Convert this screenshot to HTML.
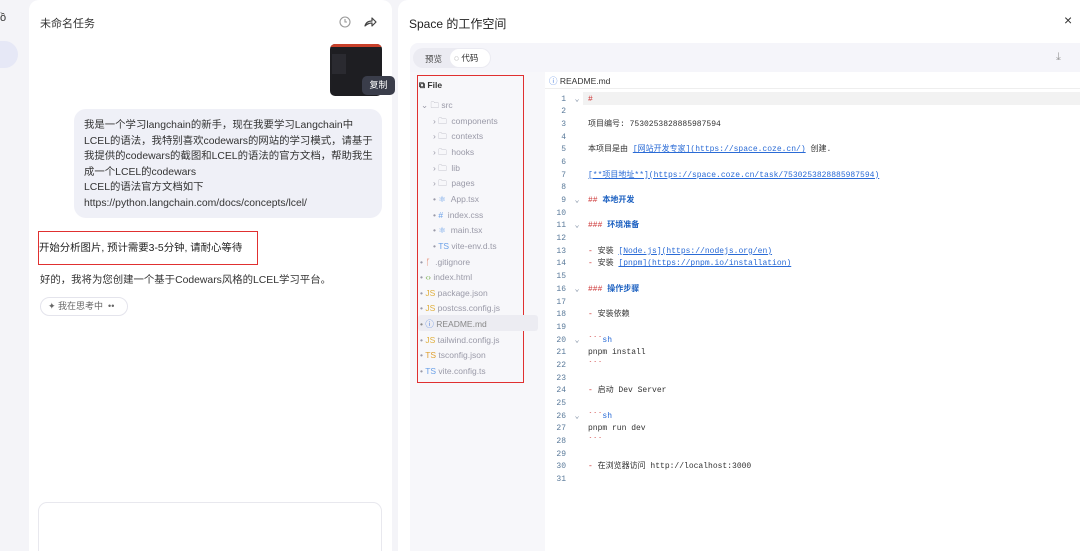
<!DOCTYPE html>
<html><head><meta charset="utf-8"><style>
*{margin:0;padding:0;box-sizing:border-box}
html,body{width:1080px;height:551px;overflow:hidden;background:#f4f4f8}
body{font-family:"Liberation Sans","Noto Sans CJK SC",sans-serif;position:relative;color:#222}
.abs{position:absolute}
.chat{left:29px;top:0;width:363px;height:551px;background:#fff;border-radius:10px 10px 0 0;overflow:hidden}
.right{left:398px;top:0;width:682px;height:551px;background:#fff;border-radius:10px 0 0 0;overflow:hidden}
.tree div{position:absolute;font-size:8.5px;color:#9a9aa8;white-space:nowrap;height:12px;line-height:12px}
.ed{position:absolute;left:150px;top:93.5px;width:532px}
.ed p{height:12.7px;line-height:12.7px;font-family:"Liberation Mono","Noto Sans CJK SC",monospace;font-size:8px;white-space:nowrap;color:#333;position:relative}
.ed p i{font-style:normal;display:inline-block;width:18px;text-align:right;color:#5a7a9a}
.ed p b{font-weight:normal;display:inline-block;width:22px;text-align:center;color:#7a8aa0}
.lk{color:#2a6bd6;text-decoration:underline}
.h{color:#1a5fc0;font-weight:bold}
.r{color:#c33}
</style></head><body>
<div class="abs" style="left:0;top:12px;font-size:11px;color:#333">ồ</div>
<div class="abs" style="left:0;top:41px;width:18px;height:27px;background:#e6e8f6;border-radius:0 14px 14px 0"></div>
<div class="abs chat">
 <div class="abs" style="left:11px;top:15px;font-size:11px;color:#333">未命名任务</div>
 <svg class="abs" style="left:310px;top:16px" width="12" height="12" viewBox="0 0 12 12"><circle cx="6" cy="6" r="5" fill="none" stroke="#999" stroke-width="1.1"/><path d="M6 3v3h2" fill="none" stroke="#999" stroke-width="1.1"/></svg>
 <svg class="abs" style="left:335px;top:16px" width="13" height="12" viewBox="0 0 13 12"><path d="M1 10C2 6 5 5 8 5V2l4 4-4 4V7C5 7 3 8 1 10z" fill="none" stroke="#444" stroke-width="1.2" stroke-linejoin="round"/></svg>
 <div class="abs" style="left:301px;top:44px;width:52px;height:52px;background:#1e1e22;border-radius:5px;overflow:hidden"><div style="height:3px;background:#c8402a"></div><div style="position:absolute;left:2px;top:10px;width:14px;height:20px;background:#2a2a30"></div></div>
 <div class="abs" style="left:45px;top:109px;width:308px;height:109px;background:#eff0f7;border-radius:12px;padding:9px 0 0 10px;font-size:10.4px;line-height:15.6px;color:#333;white-space:nowrap">我是一个学习langchain的新手，现在我要学习Langchain中<br>LCEL的语法，我特别喜欢codewars的网站的学习模式，请基于<br>我提供的codewars的截图和LCEL的语法的官方文档，帮助我生<br>成一个LCEL的codewars<br>LCEL的语法官方文档如下<br>https://python.langchain.com/docs/concepts/lcel/</div>
 <div class="abs" style="left:9px;top:231px;width:220px;height:34px;border:1.5px solid #e03030"></div>
 <div class="abs" style="left:10px;top:239px;font-size:10.4px;color:#222">开始分析图片, 预计需要3-5分钟, 请耐心等待</div>
 <div class="abs" style="left:11px;top:271px;font-size:10.4px;color:#333">好的，我将为您创建一个基于Codewars风格的LCEL学习平台。</div>
 <div class="abs" style="left:11px;top:297px;width:88px;height:19px;border:1px solid #e4e4ec;border-radius:10px;font-size:9px;color:#666;line-height:17px;padding-left:7px">✦ 我在思考中 &nbsp;••</div>
 <div class="abs" style="left:9px;top:502px;width:344px;height:60px;border:1px solid #e8e8ee;border-radius:9px;background:#fff"></div>
</div>
<div class="abs" style="left:362px;top:76px;width:33px;height:19px;background:#3a3d4a;border-radius:5px;color:#fff;font-size:9px;line-height:19px;text-align:center">复制</div>
<div class="abs right">
 <div class="abs" style="left:11px;top:15px;font-size:12px;color:#222">Space 的工作空间</div>
 <div class="abs" style="left:666px;top:12px;font-size:14px;color:#333">×</div>
 <div class="abs" style="left:12px;top:43px;width:670px;height:29px;background:#f5f5fa;border-radius:8px 0 0 0"></div>
 <div class="abs" style="left:15px;top:48px;width:78px;height:20px;background:#ebebf2;border-radius:10px"></div>
 <div class="abs" style="left:27px;top:53px;font-size:8.5px;color:#444">预览</div>
 <div class="abs" style="left:52px;top:49px;width:40px;height:18px;background:#fff;border-radius:9px;font-size:8.5px;line-height:18px;padding-left:4px;color:#333">◌ 代码</div>
 <div class="abs" style="left:658px;top:51px;font-size:11px;color:#999">⤓</div>
 <div class="abs" style="left:12px;top:72px;width:135px;height:479px;background:#f7f7fa"></div>
 <div class="abs" style="left:19px;top:75px;width:107px;height:308px;border:1.5px solid #e03030"></div>
 <div class="tree">
  <div style="left:21px;top:79px;color:#333;font-weight:bold">⧉ File</div>
  <div style="left:23px;top:99px">⌄ 🗀 src</div>
  <div style="left:35px;top:115px">› 🗀 &nbsp;components</div>
  <div style="left:35px;top:130px">› 🗀 &nbsp;contexts</div>
  <div style="left:35px;top:146px">› 🗀 &nbsp;hooks</div>
  <div style="left:35px;top:162px">› 🗀 &nbsp;lib</div>
  <div style="left:35px;top:177px">› 🗀 &nbsp;pages</div>
  <div style="left:35px;top:193px">• <span style="color:#6aa0e8">⚛</span> &nbsp;App.tsx</div>
  <div style="left:35px;top:209px">• <span style="color:#6aa0e8">#</span> &nbsp;index.css</div>
  <div style="left:35px;top:224px">• <span style="color:#6aa0e8">⚛</span> &nbsp;main.tsx</div>
  <div style="left:35px;top:240px">• <span style="color:#6aa0e8">TS</span> vite-env.d.ts</div>
  <div style="left:22px;top:256px">• <span style="color:#e07050">ᚴ</span> &nbsp;.gitignore</div>
  <div style="left:22px;top:271px">• <span style="color:#7ab050">‹›</span> index.html</div>
  <div style="left:22px;top:287px">• <span style="color:#e0b040">JS</span> package.json</div>
  <div style="left:22px;top:302px">• <span style="color:#e0b040">JS</span> postcss.config.js</div>
  <div style="left:20px;top:315px;width:120px;height:16px;background:#ececf2;border-radius:3px"></div>
  <div style="left:22px;top:318px;color:#888">• <span style="color:#5a8ae0">ⓘ</span> README.md</div>
  <div style="left:22px;top:334px">• <span style="color:#e0b040">JS</span> tailwind.config.js</div>
  <div style="left:22px;top:349px">• <span style="color:#e0a030">TS</span> tsconfig.json</div>
  <div style="left:22px;top:365px">• <span style="color:#6aa0e8">TS</span> vite.config.ts</div>
 </div>
 <div class="abs" style="left:147px;top:88px;width:535px;height:1px;background:#eee"></div>
 <div class="abs" style="left:151px;top:75px;font-size:8.5px;color:#333"><span style="color:#5a8ae0">ⓘ</span> README.md</div>
 <div class="abs" style="left:185px;top:92px;width:497px;height:13px;background:#f2f2f2"></div>
 <div class="ed">
  <p><i>1</i><b>⌄</b><span class="r">#</span></p>
  <p><i>2</i></p>
  <p><i>3</i><b></b>项目编号: 7530253828885987594</p>
  <p><i>4</i></p>
  <p><i>5</i><b></b>本项目是由 <span class="lk">[网站开发专家](https://space.coze.cn/)</span> 创建.</p>
  <p><i>6</i></p>
  <p><i>7</i><b></b><span class="lk">[**项目地址**](https://space.coze.cn/task/7530253828885987594)</span></p>
  <p><i>8</i></p>
  <p><i>9</i><b>⌄</b><span class="r">##</span> <span class="h">本地开发</span></p>
  <p><i>10</i></p>
  <p><i>11</i><b>⌄</b><span class="r">###</span> <span class="h">环境准备</span></p>
  <p><i>12</i></p>
  <p><i>13</i><b></b><span class="r">-</span> 安装 <span class="lk">[Node.js](https://nodejs.org/en)</span></p>
  <p><i>14</i><b></b><span class="r">-</span> 安装 <span class="lk">[pnpm](https://pnpm.io/installation)</span></p>
  <p><i>15</i></p>
  <p><i>16</i><b>⌄</b><span class="r">###</span> <span class="h">操作步骤</span></p>
  <p><i>17</i></p>
  <p><i>18</i><b></b><span class="r">-</span> 安装依赖</p>
  <p><i>19</i></p>
  <p><i>20</i><b>⌄</b><span class="r">&#96;&#96;&#96;</span><span style="color:#2a6bd6">sh</span></p>
  <p><i>21</i><b></b>pnpm install</p>
  <p><i>22</i><b></b><span class="r">&#96;&#96;&#96;</span></p>
  <p><i>23</i></p>
  <p><i>24</i><b></b><span class="r">-</span> 启动 Dev Server</p>
  <p><i>25</i></p>
  <p><i>26</i><b>⌄</b><span class="r">&#96;&#96;&#96;</span><span style="color:#2a6bd6">sh</span></p>
  <p><i>27</i><b></b>pnpm run dev</p>
  <p><i>28</i><b></b><span class="r">&#96;&#96;&#96;</span></p>
  <p><i>29</i></p>
  <p><i>30</i><b></b><span class="r">-</span> 在浏览器访问 http://localhost:3000</p>
  <p><i>31</i></p>
 </div>
</div>
</body></html>
